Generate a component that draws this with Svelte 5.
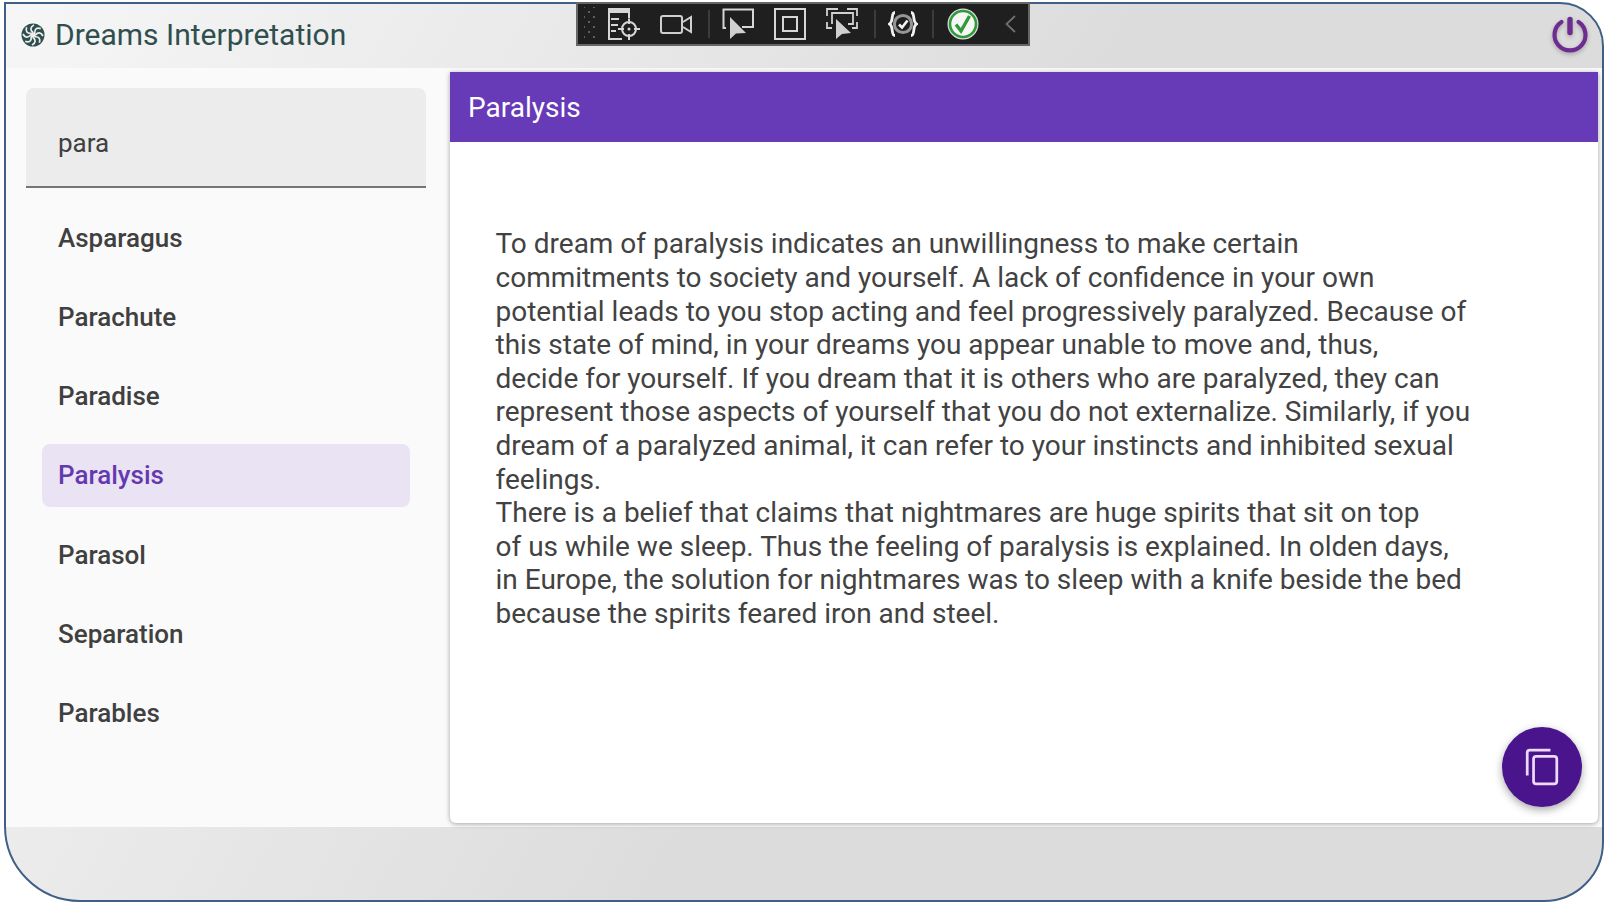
<script>
  const items = ['Asparagus', 'Parachute', 'Paradise', 'Paralysis', 'Parasol', 'Separation', 'Parables'];
  const arms = [0, 45, 90, 135, 180, 225, 270, 315];
  const lines = [
    'To dream of paralysis indicates an unwillingness to make certain',
    'commitments to society and yourself. A lack of confidence in your own',
    'potential leads to you stop acting and feel progressively paralyzed. Because of',
    'this state of mind, in your dreams you appear unable to move and, thus,',
    'decide for yourself. If you dream that it is others who are paralyzed, they can',
    'represent those aspects of yourself that you do not externalize. Similarly, if you',
    'dream of a paralyzed animal, it can refer to your instincts and inhibited sexual',
    'feelings.',
    'There is a belief that claims that nightmares are huge spirits that sit on top',
    'of us while we sleep. Thus the feeling of paralysis is explained. In olden days,',
    'in Europe, the solution for nightmares was to sleep with a knife beside the bed',
    'because the spirits feared iron and steel.'
  ];
</script>

<div class="page">
  <div class="window">
    <header class="top">
      <svg class="logo" viewBox="0 0 24 24" fill="none">
        <circle cx="12" cy="12" r="11.5" fill="#2f4f4f" />
        {#each arms as a}
          <path d="M12 9.5C9 7 9 4 13 2" stroke="#eeeeee" stroke-width="1.7" transform="rotate({a} 12 12)" />
        {/each}
        <circle cx="12" cy="12" r="2.8" fill="#eeeeee" />
      </svg>
      <h1>Dreams Interpretation</h1>
      <svg class="power" viewBox="0 0 40 40" fill="none" stroke="#6e2c91" stroke-linecap="round">
        <path d="M11.5 7A15.5 15.5 0 1 0 28.5 7" stroke-width="4.2" />
        <path d="M20 4.5V17.5" stroke-width="5.4" />
      </svg>
    </header>

    <div class="main">
      <aside class="side">
        <div class="search"><span>para</span></div>
        <ul>
          {#each items as item}
            <li class:active={item === 'Paralysis'}>{item}</li>
          {/each}
        </ul>
      </aside>
      <section class="panel">
        <div class="bar">Paralysis</div>
        <div class="body">
          {#each lines as line}
            <p>{line}</p>
          {/each}
        </div>
        <button class="fab" aria-label="Copy">
          <svg viewBox="0 0 32 36" fill="none" stroke="#ecd9fb" stroke-width="2.6">
            <path d="M2 26V4.5A2.5 2.5 0 0 1 4.5 2H24" />
            <rect x="8" y="8" width="22" height="26" rx="2.5" />
          </svg>
        </button>
      </section>
    </div>
    <div class="foot"></div>
  </div>

  <div class="toolbar">
    <div class="grip"></div>
    <svg class="ic first" viewBox="0 0 32 32" fill="none" stroke="#d6d6d6" stroke-width="2">
      <path d="M14 31H1V1H21V10" />
      <rect x="0" y="0" width="22" height="5" fill="#d6d6d6" stroke="none" />
      <path d="M3 11H11M3 17H10M3 23H8" />
      <circle cx="21" cy="21" r="7" />
      <circle cx="21" cy="21" r="1.5" fill="#d6d6d6" stroke="none" />
      <path d="M21 10.5V16M21 26V32M10 21H16M26 21H32" />
    </svg>
    <svg class="ic" viewBox="0 0 32 32" fill="none" stroke="#cfcfcf" stroke-width="2">
      <rect x="1" y="8" width="21" height="17" rx="2" />
      <path d="M23 14L31 9V24L23 19" />
    </svg>
    <i class="sep"></i>
    <svg class="ic first" viewBox="0 0 32 32" fill="none" stroke="#d6d6d6" stroke-width="2">
      <path d="M4 20H1.5V1.5H31V19H20" />
      <path d="M8 9V31L14 25.5L24 25Z" fill="#d0d0d0" stroke="none" />
    </svg>
    <svg class="ic" viewBox="0 0 32 32" fill="none" stroke="#d6d6d6" stroke-width="2">
      <rect x="1" y="1" width="30" height="30" />
      <rect x="9" y="9" width="14" height="14" />
    </svg>
    <svg class="ic" viewBox="0 0 32 32" fill="none" stroke="#d0d0d0" stroke-width="1.8">
      <path d="M1 8V1H12M21 1H31V8M31 14V20H26M1 14V20H6" />
      <path d="M6 16V5H27V16H22" />
      <path d="M10 11V31L16 26L25 25Z" fill="#d0d0d0" stroke="none" />
    </svg>
    <i class="sep"></i>
    <svg class="ic braces" viewBox="0 0 30 32" fill="none">
      <circle cx="15" cy="16" r="8.6" stroke="#969696" stroke-width="3" />
      <path d="M7 4.5C2.5 4.5 6 13.5 1.5 16C6 18.5 2.5 27.5 7 27.5M23 4.5C27.5 4.5 24 13.5 28.5 16C24 18.5 27.5 27.5 23 27.5" stroke="#f2f2f2" stroke-width="2.8" />
      <path d="M11 16.5L14 19.5L19.5 12.5" stroke="#f2f2f2" stroke-width="2.6" />
    </svg>
    <i class="sep last"></i>
    <svg class="check" viewBox="0 0 32 32" fill="none">
      <circle cx="16" cy="16" r="15.5" fill="#dddddd" />
      <circle cx="16" cy="16" r="13" fill="#f6f6f6" stroke="#2e9a3a" stroke-width="2.6" />
      <path d="M9 16.5L14 23L22.5 8" stroke="#2e9a3a" stroke-width="3.4" />
    </svg>
    <svg class="chev" viewBox="0 0 11 18" fill="none" stroke="#6f6f6f" stroke-width="1.8">
      <path d="M10 1L1.5 9L10 17" />
    </svg>
  </div>
</div>

<style>
  :global(body) {
    margin: 0;
    background: #fff;
  }
  .page {
    position: relative;
    width: 1608px;
    height: 905px;
    padding: 2px 4px 3px 4px;
    box-sizing: border-box;
    font-family: Roboto, sans-serif;
  }
  .window {
    height: 100%;
    box-sizing: border-box;
    display: flex;
    flex-direction: column;
    border: 2px solid #3f5f87;
    border-radius: 0 44px 60px 76px;
    background: linear-gradient(119deg, #f6f6f6 0%, #dcdcdc 55%);
    overflow: hidden;
  }
  .top {
    height: 64px;
    display: flex;
    align-items: center;
    padding: 0 0 2px 15px;
    box-sizing: border-box;
    flex: none;
  }
  .logo {
    width: 24px;
    height: 24px;
    margin-right: 10px;
  }
  h1 {
    margin: 0 0 2px;
    font-weight: 400;
    font-size: 30px;
    color: #2f4f4f;
  }
  .power {
    width: 40px;
    height: 40px;
    margin-left: auto;
    margin-right: 12px;
    filter: drop-shadow(0 2px 2px rgba(0, 0, 0, 0.25));
  }
  .main {
    height: 759px;
    flex: none;
    display: flex;
    background: #fafafa;
  }
  .side {
    width: 440px;
    flex: none;
    padding: 20px 20px 0;
    box-sizing: border-box;
  }
  .search {
    height: 100px;
    box-sizing: border-box;
    background: #ececec;
    border-radius: 8px 8px 0 0;
    border-bottom: 2px solid #757575;
    padding: 12px 32px 0;
    display: flex;
    align-items: center;
    font-size: 26px;
    color: #404040;
  }
  ul {
    list-style: none;
    margin: 18px 0 0;
    padding: 0 16px;
  }
  li {
    height: 63.25px;
    margin-bottom: 16px;
    padding: 0 16px;
    display: flex;
    align-items: center;
    font-size: 26px;
    font-weight: 500;
    color: #404040;
    border-radius: 8px;
  }
  li.active {
    background: #eae3f3;
    color: #6439b0;
  }
  .panel {
    position: relative;
    width: 1148px;
    height: 751px;
    margin: 4px 0 0 4px;
    background: #fff;
    border-radius: 0 0 6px 6px;
    box-shadow: 0 1px 5px rgba(0, 0, 0, 0.35);
  }
  .bar {
    height: 70px;
    background: #673ab7;
    color: #fff;
    font-size: 28px;
    display: flex;
    align-items: center;
    padding: 0 18px;
  }
  .body {
    padding: 85.4px 46px 0 45.5px;
  }
  p {
    margin: 0;
    font-size: 28px;
    line-height: 33.6px;
    color: #424242;
    white-space: nowrap;
  }
  .fab {
    position: absolute;
    right: 16px;
    bottom: 16px;
    width: 80px;
    height: 80px;
    border: 0;
    padding: 0;
    border-radius: 50%;
    background: #4a148c;
    box-shadow: 0 3px 8px rgba(0, 0, 0, 0.35);
    display: flex;
    align-items: center;
    justify-content: center;
  }
  .fab svg {
    width: 34px;
    height: 38px;
  }
  .foot {
    flex: 1;
  }
  .toolbar {
    position: absolute;
    left: 576px;
    top: 2px;
    width: 454px;
    height: 44px;
    box-sizing: border-box;
    background: #1f1f1f;
    border: 2px solid #666;
    display: flex;
    align-items: center;
  }
  .grip {
    width: 12px;
    height: 34px;
    margin-left: 6px;
    background-image:
      radial-gradient(#5e5e5e 0.9px, transparent 1.2px),
      radial-gradient(#5e5e5e 0.9px, transparent 1.2px);
    background-size: 10px 10px;
    background-position: 0 0, 5px 5px;
  }
  .ic {
    width: 32px;
    height: 32px;
    flex: none;
    margin-left: 20px;
  }
  .ic.first {
    margin-left: 12px;
  }
  .ic.braces {
    width: 30px;
    margin-left: 12px;
  }
  .sep {
    width: 2px;
    height: 28px;
    flex: none;
    background: #3b3b3b;
    margin-left: 16px;
  }
  .sep.last {
    margin-left: 14px;
  }
  .check {
    width: 32px;
    height: 32px;
    flex: none;
    margin-left: 13px;
  }
  .chev {
    width: 11px;
    height: 18px;
    flex: none;
    margin-left: 26px;
  }
</style>
